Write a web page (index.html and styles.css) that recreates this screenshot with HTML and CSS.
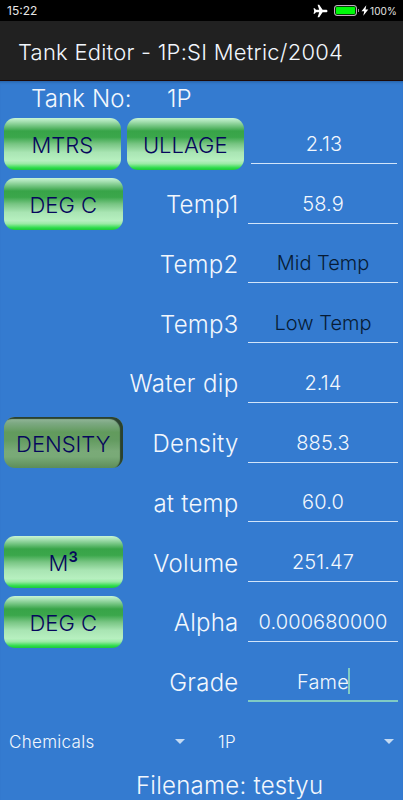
FILE: index.html
```html
<!DOCTYPE html>
<html lang="en">
<head>
<meta charset="utf-8">
<title>Tank Editor</title>
<link rel="stylesheet" href="styles.css">
</head>
<body>
<div class="status">
  <span class="clock">15:22</span>
  <svg class="plane" width="15" height="14" viewBox="0 0 15 14"><path fill="#fff" d="M14.500 7c0-.7-.7-1.300-1.500-1.300H9.600L6.200.8H4.600l1.600 4.900H3L1.700 4.200H.5L1.200 7 .5 9.800h1.200L3 8.300h3.200l-1.600 4.900h1.600l3.400-4.900H13c.8 0 1.500-.6 1.500-1.300z"/></svg>
  <span class="battery"></span>
  <svg class="bolt" width="8" height="11" viewBox="0 0 8 11"><path fill="#fff" d="M5.300.2.500 6.200h2.700L2.300 10.800 7.300 4.500H4.500z"/></svg>
  <span class="charge">100%</span>
</div>
<header class="bar">Tank Editor - 1P:SI Metric/2004</header>
<main>
  <div class="tank"><span class="tank-label">Tank No:</span><span>1P</span></div>
  <div class="row first"><button class="btn">MTRS</button><button class="btn">ULLAGE</button><div class="field">2.13</div></div>
  <div class="row"><button class="btn">DEG C</button><span class="label">Temp1</span><div class="field">58.9</div></div>
  <div class="row"><span></span><span class="label">Temp2</span><div class="field hint">Mid Temp</div></div>
  <div class="row"><span></span><span class="label">Temp3</span><div class="field hint">Low Temp</div></div>
  <div class="row"><span class="label wide">Water dip</span><div class="field">2.14</div></div>
  <div class="row"><button class="btn pressed">DENSITY</button><span class="label">Density</span><div class="field">885.3</div></div>
  <div class="row"><span></span><span class="label">at temp</span><div class="field">60.0</div></div>
  <div class="row"><button class="btn">M<span class="cube">³</span></button><span class="label">Volume</span><div class="field">251.47</div></div>
  <div class="row"><button class="btn">DEG C</button><span class="label">Alpha</span><div class="field">0.000680000</div></div>
  <div class="row"><span></span><span class="label">Grade</span><div class="field focus">Fame<i class="caret"></i></div></div>
  <div class="spinners">
    <div class="spinner">Chemicals<i class="arrow"></i></div>
    <div class="spinner">1P<i class="arrow"></i></div>
  </div>
  <div class="filename">Filename: testyu</div>
</main>
</body>
</html>
```
FILE: styles.css
```css
* { box-sizing: border-box; }
body {
  margin: 0;
  width: 403px;
  height: 800px;
  overflow: hidden;
  background: #347bd0;
  color: #f2f7fd;
  font-family: Inter, "Liberation Sans", sans-serif;
  font-weight: 300;
}
.status {
  height: 21px;
  display: flex;
  align-items: center;
  background: #000;
  color: #e6e6e6;
  font-size: 12px;
  font-weight: 400;
  padding-left: 7px;
}
.clock { flex: 1; }
.plane { margin-right: 6px; }
.battery {
  position: relative;
  width: 23px;
  height: 11px;
  border: 1px solid #c3a5c3;
  border-radius: 3px;
  background: #00fa0a;
  box-shadow: inset 0 0 0 1px #063b06;
  margin-right: 4px;
}
.battery::after {
  content: "";
  position: absolute;
  right: -3px;
  top: 3px;
  width: 1px;
  height: 3px;
  background: #a58fa5;
}
.bolt { margin-right: 1px; }
.charge { font-size: 10px; width: 33px; letter-spacing: 0.1px; }
.bar {
  height: 60px;
  background: #212121;
  border-bottom: 1px solid #1c0a08;
  padding-left: 18px;
  line-height: 63px;
  font-size: 22px;
  letter-spacing: 0.240px;
  white-space: nowrap;
}
main { box-shadow: inset 0 3px 3px -2px #275f9f; }
.tank {
  height: 33px;
  padding-left: 31px;
  display: flex;
  font-size: 24px;
  letter-spacing: 0.150px;
  line-height: 36px;
}
.tank-label { width: 136px; }
.row {
  height: 59.750px;
  padding: 0 5px 0 4px;
  display: grid;
  grid-template-columns: 118.500px 115.500px 150px;
  column-gap: 5px;
  align-items: center;
}
.row.first { grid-template-columns: 116.500px 116.500px 147px; column-gap: 6.500px; }
.row.first .field { margin-left: 1px; }
.btn {
  height: 52px;
  border: 0;
  padding: 2px 0 0;
  border-radius: 11px;
  background: linear-gradient(#c8f5d5 0%, #a4dfb0 7%, #38a448 25%, #3ba74b 37%, #78c583 50%, #a9e5b3 66%, #b7f0c0 82%, #9aeaa5 88%, #2bdc49 96%, #20c63b 100%);
  color: #06065c;
  font: 300 22px Inter, "Liberation Sans", sans-serif;
}
.cube {
  display: inline-block;
  font-weight: 400;
  line-height: 1;
  transform: translateY(1px) scaleY(1.15);
}
.btn.pressed {
  height: 51px;
  background: linear-gradient(#9abaa0 0%, #7da983 12%, #629b5d 30%, #639b60 45%, #7aaa78 67%, #79aa77 78%, #5d8d59 100%);
  box-shadow: inset -3px 2px 1px #2b422f;
}
.label {
  padding: 2px 4.500px 0 0;
  font-size: 24px;
  letter-spacing: 0.250px;
  text-align: right;
  white-space: nowrap;
}
.wide { grid-column: 1 / 3; letter-spacing: 0.350px; }
.field {
  position: relative;
  height: 40px;
  border-bottom: 1.500px solid #d2e5fa;
  text-align: center;
  font-size: 20px;
  letter-spacing: 0.120px;
  line-height: 41px;
}
.hint { color: #071b35; letter-spacing: 0; }
.focus { border-bottom: 2px solid #80cbc4; }
.caret {
  position: absolute;
  top: 6px;
  margin-left: -1px;
  width: 2px;
  height: 26px;
  background: #80cbc4;
}
.spinners {
  height: 57px;
  display: flex;
  padding: 3px 9px 0 9px;
}
.spinner {
  display: flex;
  align-items: center;
  justify-content: space-between;
  width: 176px;
  font-size: 17px;
  letter-spacing: 0.300px;
}
.spinner + .spinner { margin-left: 33px; }
.arrow {
  border: 5.500px solid transparent;
  border-top-color: #c4daf2;
  border-bottom: 0;
}
.filename { padding-left: 136px; font-size: 24px; letter-spacing: 0.250px; line-height: 34px; }
```
